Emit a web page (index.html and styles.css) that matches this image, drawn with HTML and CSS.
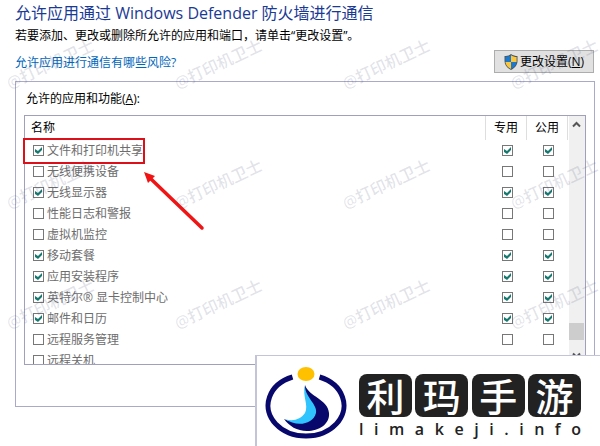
FILE: index.html
```html
<!DOCTYPE html>
<html lang="zh-CN">
<head>
    <meta charset="UTF-8">
    <title>允许的应用</title>
    <link rel="stylesheet" href="styles.css">
</head>
<body>

    <main class="page">
        <h1>允许应用通过 Windows Defender 防火墙进行通信</h1>
        <p class="intro">若要添加、更改或删除所允许的应用和端口，请单击“更改设置”。</p>

        <div class="toolbar">
            <a href="#risks">允许应用进行通信有哪些风险?</a>
            <button type="button" class="change">
                <svg class="shield" viewBox="0 0 14 16" aria-hidden="true">
                    <path d="M7 0C5 1.500 2.500 2 .5 2V7C.5 11 3 14 7 16C11 14 13.500 11 13.500 7V2C11.500 2 9 1.500 7 0Z" fill="#4b565c"/>
                    <path d="M7 1.200C5.200 2.400 3.200 2.900 1.400 3V8H7Z" fill="#1c78cc"/>
                    <path d="M7 1.200C8.800 2.400 10.800 2.900 12.600 3V8H7Z" fill="#fcc63c"/>
                    <path d="M1.400 8C1.800 11.200 4 13.600 7 15V8Z" fill="#fcc63c"/>
                    <path d="M12.600 8C12.200 11.200 10 13.600 7 15V8Z" fill="#1c78cc"/>
                </svg>
                <span>更改设置(<u>N</u>)</span>
            </button>
        </div>

        <section class="group">
            <h2 id="apps-title">允许的应用和功能(<u>A</u>):</h2>

            <div class="list">
                <div class="list-view">
                    <table aria-labelledby="apps-title">
                        <thead>
                            <tr><th class="name">名称</th><th class="net">专用</th><th class="net last">公用</th></tr>
                        </thead>
                        <tbody>
                            <tr>
                                <td><label><input type="checkbox" checked>文件和打印机共享</label></td>
                                <td class="net"><input type="checkbox" aria-label="专用" checked></td>
                                <td class="net"><input type="checkbox" aria-label="公用" checked></td>
                            </tr>
                            <tr>
                                <td><label><input type="checkbox">无线便携设备</label></td>
                                <td class="net"><input type="checkbox" aria-label="专用"></td>
                                <td class="net"><input type="checkbox" aria-label="公用"></td>
                            </tr>
                            <tr>
                                <td><label><input type="checkbox" checked>无线显示器</label></td>
                                <td class="net"><input type="checkbox" aria-label="专用" checked></td>
                                <td class="net"><input type="checkbox" aria-label="公用" checked></td>
                            </tr>
                            <tr>
                                <td><label><input type="checkbox">性能日志和警报</label></td>
                                <td class="net"><input type="checkbox" aria-label="专用"></td>
                                <td class="net"><input type="checkbox" aria-label="公用"></td>
                            </tr>
                            <tr>
                                <td><label><input type="checkbox">虚拟机监控</label></td>
                                <td class="net"><input type="checkbox" aria-label="专用"></td>
                                <td class="net"><input type="checkbox" aria-label="公用"></td>
                            </tr>
                            <tr>
                                <td><label><input type="checkbox" checked>移动套餐</label></td>
                                <td class="net"><input type="checkbox" aria-label="专用" checked></td>
                                <td class="net"><input type="checkbox" aria-label="公用" checked></td>
                            </tr>
                            <tr>
                                <td><label><input type="checkbox" checked>应用安装程序</label></td>
                                <td class="net"><input type="checkbox" aria-label="专用" checked></td>
                                <td class="net"><input type="checkbox" aria-label="公用" checked></td>
                            </tr>
                            <tr>
                                <td><label><input type="checkbox" checked>英特尔® 显卡控制中心</label></td>
                                <td class="net"><input type="checkbox" aria-label="专用" checked></td>
                                <td class="net"><input type="checkbox" aria-label="公用" checked></td>
                            </tr>
                            <tr>
                                <td><label><input type="checkbox" checked>邮件和日历</label></td>
                                <td class="net"><input type="checkbox" aria-label="专用" checked></td>
                                <td class="net"><input type="checkbox" aria-label="公用" checked></td>
                            </tr>
                            <tr>
                                <td><label><input type="checkbox">远程服务管理</label></td>
                                <td class="net"><input type="checkbox" aria-label="专用"></td>
                                <td class="net"><input type="checkbox" aria-label="公用"></td>
                            </tr>
                            <tr>
                                <td><label><input type="checkbox">远程关机</label></td>
                                <td class="net"><input type="checkbox" aria-label="专用"></td>
                                <td class="net"><input type="checkbox" aria-label="公用"></td>
                            </tr>
                        </tbody>
                    </table>
                </div>

                <div class="scrollbar">
                    <svg viewBox="0 0 16 16" aria-hidden="true"><path d="M4 10L7.500 6.500L11 10" fill="none" stroke="#555" stroke-width="2"/></svg>
                    <div class="thumb"></div>
                    <svg viewBox="0 0 16 16" aria-hidden="true"><path d="M4 6L7.500 9.500L11 6" fill="none" stroke="#555" stroke-width="2"/></svg>
                </div>

                <!-- red marker and arrow on the printer sharing row -->
                <div class="marker"></div>
                <svg class="arrow" viewBox="0 0 62 60" aria-hidden="true">
                    <path d="M7 7L58 56" stroke="#f01414" stroke-width="3.500" stroke-linecap="round"/>
                    <path d="M0 0L11 4L4 11Z" fill="#f01414"/>
                </svg>
            </div>
        </section>

        <div class="watermarks" aria-hidden="true">
            <span>@打印机卫士</span><span>@打印机卫士</span><span>@打印机卫士</span><span>@打印机卫士</span>
            <span>@打印机卫士</span><span>@打印机卫士</span><span>@打印机卫士</span><span>@打印机卫士</span>
            <span>@打印机卫士</span><span>@打印机卫士</span><span>@打印机卫士</span><span>@打印机卫士</span>
        </div>

        <aside class="banner">
            <svg class="logo" viewBox="0 0 82 76" aria-hidden="true">
                <path d="M27.500 11A38 30.500 0 1 0 54.500 11" fill="none" stroke="#08086c" stroke-width="5"/>
                <ellipse cx="41" cy="8" rx="8.500" ry="7" fill="#ffc000"/>
                <path d="M40 19C44 31 63 33 64 47C65 58 54 65 42 65C32 65 24 60 19 53C28 57 38 57 43 50C49 41 38 31 40 19Z" fill="#08086c"/>
                <path d="M40 20C40 31 53 39 51 47C48 59 31 61 20 53C28 56 36 53 40 47C44 39 37 30 40 20Z" fill="#30c4ff"/>
            </svg>
            <div class="brand">
                <div class="seals"><span>利</span><span>玛</span><span>手</span><span>游</span></div>
                <div class="domain"><span>l</span><span>i</span><span>m</span><span>a</span><span>k</span><span>e</span><span>j</span><span>i</span><span>.</span><span>i</span><span>n</span><span>f</span><span>o</span></div>
            </div>
        </aside>
    </main>

</body>
</html>
```
FILE: styles.css
```css
* { box-sizing: border-box; }
body {
    margin: 0;
    background: #fff;
    color: #000;
    font-family: "Open Sans", "Noto Sans CJK SC", sans-serif;
    font-size: 12px;
    line-height: 18px;
}
.page {
    position: relative;
    min-height: 100vh;
    padding: 1px 5px 39px 15px;
    overflow: hidden;
}
h1 {
    margin: 0;
    color: #1a3a94;
    font-size: 16px;
    font-weight: normal;
    line-height: 24px;
}
.intro { margin: 2px 0 5px; }
.toolbar {
    display: flex;
    justify-content: space-between;
    align-items: center;
    margin-bottom: 8px;
    padding-right: 1px;
}
.toolbar a {
    padding-top: 2px;
    color: #0066bb;
    text-decoration: none;
}
.change {
    display: flex;
    align-items: center;
    justify-content: center;
    gap: 2px;
    width: 100px;
    height: 23px;
    padding: 0;
    border: 1px solid #adadad;
    background: #e1e1e1;
    color: #000;
    font: inherit;
}
.shield {
    width: 14px;
    height: 16px;
}
.group {
    padding: 8px 8px 41px;
    border: 1px solid #a9a9c8;
}
h2 {
    margin: 0 0 7px 2px;
    font-size: 12px;
    font-weight: normal;
    line-height: 18px;
}

/* App list */
.list {
    position: relative;
    display: flex;
    height: 250px;
    border: 1px solid #a0a0bc;
}
.list-view {
    flex: 1;
    overflow: hidden;
}
table {
    width: 100%;
    border-collapse: separate;
    border-spacing: 0;
    table-layout: fixed;
}
th, td { padding: 0; }
th {
    height: 24px;
    font-weight: normal;
    text-align: left;
}
th.name { padding-left: 6px; }
th.net {
    width: 41px;
    border-left: 1px solid #dedede;
    text-align: center;
}
th.last {
    width: 42px;
    border-right: 1px solid #dedede;
}
td {
    height: 21px;
    color: #6d6d6d;
}
td.net { padding-left: 17px; }
label {
    display: flex;
    align-items: center;
    gap: 3px;
    padding-left: 8px;
}
input {
    display: block;
    appearance: none;
    width: 11px;
    height: 11px;
    margin: 0;
    border: 1px solid #777;
    background: #fff;
}
input:checked::before {
    content: "";
    display: block;
    height: 9px;
    background: #16796f;
    clip-path: polygon(1px 3px, 4px 5px, 8px 1px, 8px 4px, 4px 8px, 1px 6px);
}
.scrollbar {
    display: flex;
    flex-direction: column;
    width: 16px;
    margin-left: 1px;
    background: #f0f0f0;
}
.scrollbar svg {
    flex: none;
    width: 16px;
    height: 17px;
}
.thumb {
    height: 17px;
    margin: auto 1px 7px 0;
    background: #cdcdcd;
}

/* Annotations */
.marker {
    position: absolute;
    top: 22px;
    left: -2px;
    width: 122px;
    height: 26px;
    border: 2px solid #dc1018;
}
.arrow {
    position: absolute;
    top: 56px;
    left: 119px;
    width: 62px;
    height: 60px;
}
.watermarks {
    position: absolute;
    top: 4px;
    left: -34px;
    display: grid;
    grid-template-columns: repeat(4, 168px);
    grid-auto-rows: 120px;
    place-items: center;
    color: rgba(70, 80, 120, 0.17);
    font-size: 16px;
    font-weight: 500;
    pointer-events: none;
}
.watermarks span { transform: rotate(-25deg); }

/* Site banner */
.banner {
    position: absolute;
    right: 0;
    bottom: 0;
    display: flex;
    gap: 12px;
    width: 345px;
    height: 91px;
    padding: 10px 0 0 8px;
    border-top: 1px solid #c4c4d8;
    border-left: 2px solid #c4c4d8;
    background: #fff;
}
.logo {
    width: 82px;
    height: 76px;
}
.brand {
    width: 222px;
    padding-top: 8px;
}
.seals {
    display: flex;
    justify-content: space-between;
}
.seals span {
    width: 53px;
    height: 43px;
    border-radius: 8px;
    background: #222;
    color: #fff;
    font-family: "Noto Sans CJK SC", sans-serif;
    font-size: 38px;
    font-weight: 500;
    line-height: 41px;
    text-align: center;
}
.domain {
    display: flex;
    justify-content: space-between;
    margin-top: 3px;
    color: #222;
    font-family: "Open Sans", sans-serif;
    font-size: 16px;
    font-weight: 600;
}
```
